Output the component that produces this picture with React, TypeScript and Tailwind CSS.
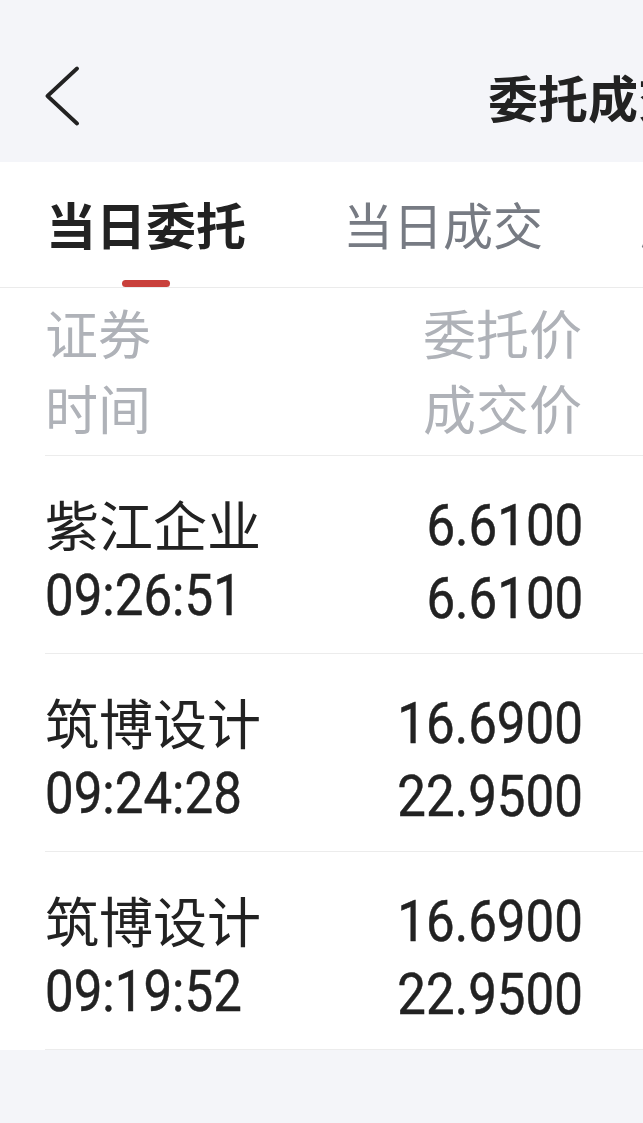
import React from "react";

const cjk = "font-['Noto_Sans_CJK_SC','Noto_Sans',sans-serif]";
const num = "inline-block font-['Roboto','Liberation_Sans',sans-serif] text-[58px] font-normal scale-x-[0.88] [-webkit-text-stroke:0.5px_#222222]";

const rows = [
  { name: "紫江企业", time: "09:26:51", p1: "6.6100", p2: "6.6100" },
  { name: "筑博设计", time: "09:24:28", p1: "16.6900", p2: "22.9500" },
  { name: "筑博设计", time: "09:19:52", p1: "16.6900", p2: "22.9500" },
];

export default function App() {
  return (
    <div className={`w-[643px] h-[1123px] overflow-hidden bg-[#f4f5f9] text-[#222222] ${cjk}`}>
      {/* Nav bar */}
      <div className="flex items-start h-[162px] whitespace-nowrap">
        <svg className="ml-[42px] mt-[66px] shrink-0" width="40" height="60" viewBox="0 0 40 60" fill="none">
          <path d="M35 2.5 L5.5 30 L35 57.5" stroke="#222222" strokeWidth="3.8" strokeLinecap="round" strokeLinejoin="round" />
        </svg>
        <div className="ml-[406px] mt-[71px] text-[50px] leading-[50px] font-bold">委托成交</div>
      </div>

      {/* Tabs */}
      <div className="flex h-[126px] bg-white border-b border-[#ebebeb] pl-[46px] gap-[97px] whitespace-nowrap">
        <div className="flex flex-col items-center pt-[36px] shrink-0">
          <div className="text-[50px] leading-[50px] font-bold text-[#222222]">当日委托</div>
          <div className="mt-[32px] w-[48px] h-[8px] rounded-full bg-[#c9403b]"></div>
        </div>
        <div className="flex flex-col items-center pt-[36px] shrink-0">
          <div className="text-[50px] leading-[50px] text-[#777b83]">当日成交</div>
        </div>
        <div className="flex flex-col items-center pt-[36px] shrink-0">
          <div className="text-[50px] leading-[50px] text-[#777b83]">历史委托</div>
        </div>
      </div>

      {/* Table */}
      <div className="bg-white">
        <div className="ml-[45px] border-b border-[#ececec] pt-[7px] pb-[10px]">
          <div className="w-[537px] flex justify-between text-[53px] leading-[75px] text-[#afb2b8]">
            <div className="flex flex-col">
              <div>证券</div>
              <div>时间</div>
            </div>
            <div className="flex flex-col items-end">
              <div>委托价</div>
              <div>成交价</div>
            </div>
          </div>
        </div>

        {rows.map((r, i) => (
          <div key={i} className="ml-[45px] border-b border-[#ececec] pt-[31px] pb-[18px]">
            <div className="w-[537px] flex justify-between">
              <div className="flex flex-col">
                <div className="text-[54px] leading-[73px]">{r.name}</div>
                <div className="leading-[73px] h-[73px] -mt-[1px]">
                  <span className={`${num} leading-[73px] origin-left`}>{r.time}</span>
                </div>
              </div>
              <div className="flex flex-col items-end pt-[2px] mr-[-1px]">
                <div className="leading-[73px] h-[73px]">
                  <span className={`${num} leading-[73px] origin-right`}>{r.p1}</span>
                </div>
                <div className="leading-[73px] h-[73px]">
                  <span className={`${num} leading-[73px] origin-right`}>{r.p2}</span>
                </div>
              </div>
            </div>
          </div>
        ))}
      </div>
    </div>
  );
}
